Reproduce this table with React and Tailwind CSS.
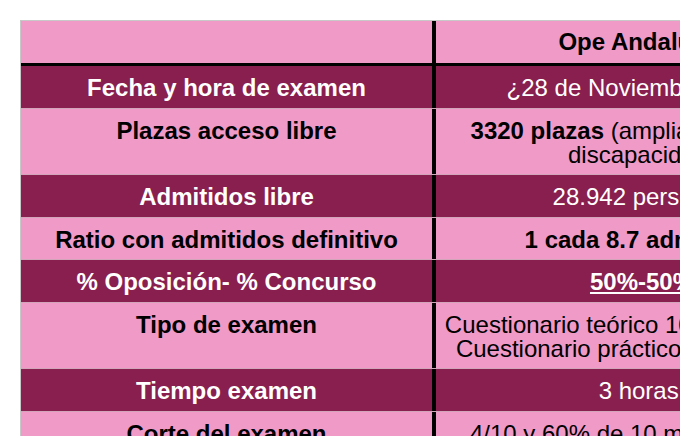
import React from "react";

const rows = [
  {
    label: "Fecha y hora de examen",
    dark: true,
    value: <span>¿28 de Noviembre 2021?</span>,
  },
  {
    label: "Plazas acceso libre",
    dark: false,
    value: (
      <span>
        <b>3320 plazas</b> (ampliables a 3486
        <br />
        discapacidad)
      </span>
    ),
  },
  { label: "Admitidos libre", dark: true, value: <span>28.942 personas</span> },
  {
    label: "Ratio con admitidos definitivo",
    dark: false,
    value: <b>1 cada 8.7 admitidos</b>,
  },
  {
    label: "% Oposición- % Concurso",
    dark: true,
    value: <b className="underline underline-offset-2">50%-50%</b>,
  },
  {
    label: "Tipo de examen",
    dark: false,
    value: (
      <span>
        Cuestionario teórico 100 preguntas +
        <br />
        Cuestionario práctico 50 preguntas
      </span>
    ),
  },
  { label: "Tiempo examen", dark: true, value: <span>3 horas.</span> },
  {
    label: "Corte del examen",
    dark: false,
    value: <span>4/10 y 60% de 10 mejores notas</span>,
  },
];

export default function App() {
  return (
    <div
      className="w-[680px] h-[436px] overflow-hidden bg-white pt-[20px] pl-[20px]"
      style={{ fontFamily: '"Liberation Sans", Arial, Helvetica, sans-serif' }}
    >
      <div className="w-[828px] border-l border-t border-[#c8c8c8] text-[24px] leading-[24px]">
        <div className="flex bg-[#ef9ac7] border-b-[3px] border-black">
          <div className="w-[415px] shrink-0 border-r-4 border-black h-[42px]" />
          <div className="w-[412px] shrink-0 pt-[9px] pb-[9px] text-center font-bold text-black whitespace-nowrap">
            Ope Andalucía
          </div>
        </div>
        {rows.map((row) => (
          <div
            key={row.label}
            className={`flex border-b border-[#d3a5ba] ${
              row.dark ? "bg-[#881f4e] text-white" : "bg-[#ef9ac7] text-black"
            }`}
          >
            <div className="w-[415px] shrink-0 border-r-4 border-black pt-[10px] pb-[7.5px] text-center font-bold whitespace-nowrap">
              {row.label}
            </div>
            <div className="w-[412px] shrink-0 pt-[10px] pb-[7.5px] text-center whitespace-nowrap">
              {row.value}
            </div>
          </div>
        ))}
      </div>
    </div>
  );
}
